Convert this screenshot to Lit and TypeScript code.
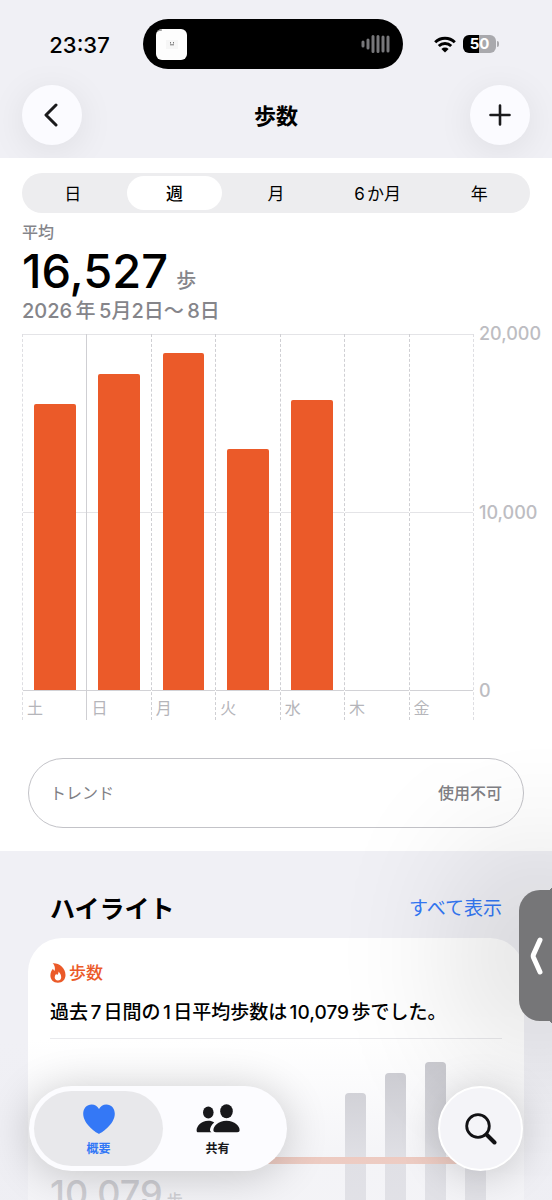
import { LitElement, html, css, svg } from "lit";
import { customElement, state } from "lit/decorators.js";

const DAYS = [
  { label: "土", steps: 16070 },
  { label: "日", steps: 17750, solid: true },
  { label: "月", steps: 18930 },
  { label: "火", steps: 13540 },
  { label: "水", steps: 16270 },
  { label: "木", steps: 0 },
  { label: "金", steps: 0 },
];
const MAX_STEPS = 20000;
const RANGES = ["日", "週", "月", "6か月", "年"];
const MINI_BARS = [86, 95, 100, 75];

const chevron = svg`<path d="M12 2 2 12l10 10" fill="none" stroke="#1a1a1c" stroke-width="3" stroke-linecap="round" stroke-linejoin="round"/>`;

@customElement("app-root")
export class AppRoot extends LitElement {
  @state() private range = "週";
  @state() private tab = "summary";

  static styles = css`
    :host {
      display: block;
      font-family: Inter, "Noto Sans CJK JP", sans-serif;
      color: #000;
      text-autospace: normal;
    }
    * { box-sizing: border-box; }
    button {
      font: inherit;
      color: inherit;
      border: 0;
      padding: 0;
      margin: 0;
      background: none;
      cursor: pointer;
    }
    h1, h2, p { margin: 0; }
    svg { display: block; }
    .screen {
      position: relative;
      height: 100vh;
      display: flex;
      flex-direction: column;
      overflow: hidden;
      background: #f0f0f5;
    }
    .top {
      padding: 19px 0 13px;
      display: flex;
      flex-direction: column;
      gap: 16px;
    }
    .status {
      display: grid;
      grid-template-columns: 24fr 260px 25fr;
      height: 50px;
      align-items: center;
    }
    .time {
      padding: 2px 0 0 16px;
      text-align: center;
      font-size: 22px;
      line-height: 28px;
      font-weight: 500;
    }
    .island {
      height: 50px;
      border-radius: 25px;
      background: #000;
      display: flex;
      align-items: center;
      justify-content: space-between;
      padding: 0 13px;
    }
    .signals {
      display: flex;
      justify-content: center;
      align-items: center;
      gap: 7px;
      padding-right: 22px;
    }
    .battery { display: flex; align-items: center; gap: 1px; }
    .cell {
      width: 33px;
      height: 18px;
      border-radius: 6px;
      background: linear-gradient(90deg, #000 50%, #a9a9ad 50%);
      color: #fff;
      font-size: 15px;
      line-height: 18px;
      font-weight: 700;
      text-align: center;
    }
    .nub { width: 2px; height: 6px; border-radius: 0 2px 2px 0; background: #a9a9ad; }
    .bar {
      display: flex;
      align-items: center;
      justify-content: space-between;
      padding: 0 22px;
    }
    .bar h1 { padding-top: 2px; font-size: 22px; line-height: 30px; font-weight: 600; }
    .round {
      width: 60px;
      height: 60px;
      border-radius: 50%;
      background: #fbfbff;
      box-shadow: 0 6px 36px rgba(0, 0, 0, 0.08);
      display: grid;
      place-items: center;
    }
    .scroll { flex: 1; min-height: 0; overflow: hidden; }
    .panel { background: #fff; padding: 15px 0 23px; }
    .segments {
      display: flex;
      height: 40px;
      margin: 0 22px;
      padding: 3px 0;
      border-radius: 20px;
      background: #ededef;
    }
    .segment {
      flex: 1;
      margin: 0 3px;
      padding-top: 2px;
      border-radius: 17px;
      font-size: 17px;
      line-height: 24px;
      font-weight: 400;
    }
    .segment.on { background: #fff; font-weight: 500; }
    .summary { margin: 7px 22px 10px; color: #85858a; }
    .caption { font-size: 16px; line-height: 24px; font-weight: 500; }
    .total { display: flex; align-items: baseline; gap: 8px; font-size: 20px; line-height: 24px; font-weight: 500; }
    .total strong { font-size: 47px; line-height: 54px; font-weight: 500; color: #000; }
    .dates { font-size: 20px; line-height: 26px; font-weight: 500; text-autospace: no-autospace; }
    .chart {
      display: grid;
      grid-template-columns: 1fr 78px;
      margin-left: 22px;
    }
    .plot { display: flex; border-right: 1px dashed #dedee2; }
    .day {
      flex: 1;
      min-width: 0;
      display: flex;
      flex-direction: column;
      border-left: 1px dashed #cfcfd3;
    }
    .day:first-child { border-left-color: #dedee2; }
    .day.solid { border-left-style: solid; }
    .track {
      height: 357px;
      display: flex;
      align-items: flex-end;
      justify-content: center;
      border-bottom: 1px solid #d2d2d6;
      background: linear-gradient(#e4e4e7, #e4e4e7) 0 0 / 100% 1px no-repeat,
        linear-gradient(#e4e4e7, #e4e4e7) 0 50% / 100% 1px no-repeat;
    }
    .fill { width: 66%; border-radius: 2px 2px 0 0; background: #eb5a29; }
    .name { height: 29px; padding: 3px 0 0 4px; font-size: 16px; line-height: 29px; color: #b5b5ba; }
    .scale {
      height: 379px;
      margin-top: -11px;
      padding-left: 5px;
      display: flex;
      flex-direction: column;
      justify-content: space-between;
      font-size: 18px;
      line-height: 22px;
      font-weight: 500;
      color: #bdbdc2;
      white-space: nowrap;
    }
    .trend {
      width: calc(100% - 56px);
      margin: 38px 28px 0;
      height: 70px;
      padding: 0 21px;
      display: flex;
      align-items: center;
      justify-content: space-between;
      border: 1px solid #c3c3c8;
      border-radius: 35px;
      font-size: 16px;
      line-height: 24px;
      color: #808085;
    }
    .trend b { font-weight: 500; }
    .heading {
      display: flex;
      align-items: center;
      justify-content: space-between;
      padding: 39px 50px 10px;
    }
    .heading h2 { font-size: 25px; line-height: 38px; font-weight: 700; }
    .heading a { font-size: 19px; line-height: 38px; color: #3478f6; text-decoration: none; }
    .card {
      margin: 0 28px;
      padding: 23px 22px 0;
      height: 420px;
      border-radius: 34px;
      background: #fff;
    }
    .topic {
      display: flex;
      align-items: center;
      gap: 3px;
      color: #eb5a29;
      font-size: 17px;
      line-height: 24px;
      font-weight: 500;
    }
    .fact {
      margin-top: 12px;
      padding-bottom: 9px;
      border-bottom: 1px solid #e9e9ec;
      font-size: 19px;
      line-height: 32px;
      font-weight: 500;
      white-space: nowrap;
    }
    .mini { position: relative; height: 220px; margin-top: 23px; }
    .mini-bars { display: flex; height: 100%; justify-content: flex-end; align-items: flex-end; gap: 19px; padding-right: 16px; }
    .mini-bar { width: 21px; border-radius: 4px 4px 0 0; background: #c6c6cc; }
    .mini-line { position: absolute; left: 0; right: 0; top: 95px; height: 7px; background: #eb8b68; }
    .mini-total { position: absolute; left: 0; top: 107px; font-size: 16px; line-height: 48px; font-weight: 500; color: #8e8e93; }
    .mini-total b { font-size: 36px; font-weight: 500; }
    .scrim {
      position: absolute;
      left: 0;
      right: 0;
      bottom: 0;
      height: 160px;
      pointer-events: none;
      background: linear-gradient(rgba(238, 238, 243, 0), rgba(238, 238, 243, 0.65) 75%, rgba(238, 238, 243, 0.68));
    }
    .handle {
      position: absolute;
      right: 0;
      top: 890px;
      width: 33px;
      height: 131px;
      border-radius: 21px 0 0 21px;
      background: #767678;
      box-shadow: 0 0 150px 28px rgba(0, 0, 0, 0.24);
      display: grid;
      place-items: center;
    }
    .handle::before,
    .handle::after {
      content: "";
      position: absolute;
      right: 0;
      width: 4px;
      height: 4px;
    }
    .handle::before { top: -4px; background: radial-gradient(circle at 0 0, transparent 4px, #767678 4px); }
    .handle::after { bottom: -4px; background: radial-gradient(circle at 0 100%, transparent 4px, #767678 4px); }
    .floating {
      position: absolute;
      left: 29px;
      right: 29px;
      bottom: 29px;
      display: flex;
      justify-content: space-between;
    }
    .tabs {
      display: flex;
      width: 258px;
      height: 85px;
      padding: 5px;
      border-radius: 43px;
      background: #fcfcff;
      box-shadow: 0 4px 44px rgba(0, 0, 0, 0.2);
    }
    .tab {
      flex: 1 0 129px;
      display: flex;
      flex-direction: column;
      align-items: center;
      gap: 5px;
      padding-top: 13px;
      border-radius: 38px;
      font-size: 12px;
      line-height: 20px;
      font-weight: 600;
      color: #18181b;
    }
    .tab + .tab { margin-left: -10px; }
    .tab.on { background: #e8e8eb; color: #3478f6; }
    .search {
      width: 85px;
      height: 85px;
      border-radius: 50%;
      border: 2px solid #fff;
      background: #f4f4f8;
      box-shadow: 0 4px 40px rgba(0, 0, 0, 0.18);
      display: grid;
      place-items: center;
    }
  `;

  private renderStatus() {
    return html`
      <div class="status">
        <div class="time">23:37</div>
        <div class="island">
          <svg width="31" height="31" viewBox="0 0 31 31" aria-hidden="true">
            <rect width="31" height="31" rx="6" fill="#fdfdfd" />
            <path d="M1 2.500Q3 1 6 1" stroke="#777" stroke-width="1" fill="none" />
            <rect x="10" y="11" width="12" height="9" fill="#f6f6f6" />
            <path d="M14.500 13v1.500M17.500 13v1.500M14 15.800h4" stroke="#777" stroke-width="1" fill="none" />
          </svg>
          <svg width="29" height="20" viewBox="0 0 29 20" aria-hidden="true">
            <path d="M2 8v4M7 6v8M12 2.500v15M17 2.500v15M22 3v14M27 3v14" stroke="#77777a" stroke-width="3" stroke-linecap="round" />
          </svg>
        </div>
        <div class="signals">
          <svg width="22" height="17" viewBox="0 0 22 17" aria-label="Wi-Fi">
            <g fill="none" stroke="#000" stroke-width="3">
              <path d="M1.200 6.300a14 14 0 0 1 19.600 0" />
              <path d="M4.800 10a9 9 0 0 1 12.400 0" />
            </g>
            <path d="M11 16.600 7.400 13a5.200 5.200 0 0 1 7.200 0z" />
          </svg>
          <div class="battery"><div class="cell">50</div><div class="nub"></div></div>
        </div>
      </div>
    `;
  }

  private renderChart() {
    return html`
      <div class="chart">
        <div class="plot">
          ${DAYS.map(
            (d) => html`
              <div class="day ${d.solid ? "solid" : ""}">
                <div class="track">
                  <div class="fill" style="height:${(d.steps / MAX_STEPS) * 100}%"></div>
                </div>
                <div class="name">${d.label}</div>
              </div>
            `
          )}
        </div>
        <div class="scale"><span>20,000</span><span>10,000</span><span>0</span></div>
      </div>
    `;
  }

  render() {
    return html`
      <div class="screen">
        <header class="top">
          ${this.renderStatus()}
          <div class="bar">
            <button class="round" aria-label="戻る">
              <svg width="17" height="24" viewBox="0 0 17 24">${chevron}</svg>
            </button>
            <h1>歩数</h1>
            <button class="round" aria-label="追加">
              <svg width="22" height="22" viewBox="0 0 22 22">
                <path d="M11 1.500v19M1.500 11h19" stroke="#1a1a1c" stroke-width="2.600" stroke-linecap="round" />
              </svg>
            </button>
          </div>
        </header>

        <main class="scroll">
          <section class="panel">
            <div class="segments">
              ${RANGES.map(
                (r) => html`<button
                  class="segment ${r === this.range ? "on" : ""}"
                  aria-pressed=${r === this.range}
                  @click=${() => (this.range = r)}
                >${r}</button>`
              )}
            </div>
            <div class="summary">
              <p class="caption">平均</p>
              <p class="total"><strong>16,527</strong>歩</p>
              <p class="dates">2026&thinsp;年&thinsp;5月2日〜&thinsp;8日</p>
            </div>
            ${this.renderChart()}
            <button class="trend"><span>トレンド</span><b>使用不可</b></button>
          </section>

          <section>
            <div class="heading">
              <h2>ハイライト</h2>
              <a href="#">すべて表示</a>
            </div>
            <article class="card">
              <div class="topic">
                <svg width="16" height="20" viewBox="0 0 16 20" aria-hidden="true">
                  <path
                    fill="#eb5a29"
                    fill-rule="evenodd"
                    d="M2.600.300C8.500-.300 15.500 4.500 15.500 12c0 4.500-3 7.700-7.600 7.700S.400 16.600.400 12.500C.400 9.500 1.600 7.500 3 5.800c.4 1 .8 1.600 1.600 2C5.300 5 4.800 2.200 2.600.300zM8.400 8.500c.3 2-.4 2.700-1.300 3.500-.4-.3-.7-.7-.9-1.200-1 1.200-1.500 2.300-1.500 3.500 0 1.900 1.300 3.200 3.200 3.200s3.300-1.300 3.300-3.300c0-2.300-1.200-4.300-2.800-5.700z"
                  />
                </svg>
                <span>歩数</span>
              </div>
              <p class="fact">過去7日間の1日平均歩数は10,079歩でした。</p>
              <div class="mini">
                <div class="mini-bars">
                  ${MINI_BARS.map((h) => html`<div class="mini-bar" style="height:${h}%"></div>`)}
                </div>
                <div class="mini-line"></div>
                <p class="mini-total"><b>10,079</b> 歩</p>
              </div>
            </article>
          </section>
        </main>

        <div class="scrim"></div>

        <button class="handle" aria-label="開く">
          <svg width="14" height="40" viewBox="0 0 14 40">
            <path d="M11 4 4.500 18.500q-.6 1.500 0 3L11 36" fill="none" stroke="#fff" stroke-width="5" stroke-linecap="round" stroke-linejoin="round" />
          </svg>
        </button>

        <div class="floating">
          <nav class="tabs">
            <button class="tab ${this.tab === "summary" ? "on" : ""}" @click=${() => (this.tab = "summary")}>
              <svg width="32" height="30" viewBox="0 0 32 30" aria-hidden="true">
                <path fill="currentColor" d="M16 29.800C14.500 29.800.200 20.500.200 9.800.200 4.200 3.800.400 8.600.400c3.400 0 6 1.900 7.400 4.600C17.400 2.300 20 .400 23.400.400c4.800 0 8.400 3.800 8.400 9.400C31.800 20.500 17.500 29.800 16 29.800z" />
              </svg>
              <span>概要</span>
            </button>
            <button class="tab ${this.tab === "sharing" ? "on" : ""}" @click=${() => (this.tab = "sharing")}>
              <svg width="44" height="30" viewBox="0 0 44 30" fill="currentColor" aria-hidden="true">
                <ellipse cx="12.300" cy="8.600" rx="5.300" ry="6" />
                <path d="M15.500 28.300H2.400C1.200 28.300.600 27.600.600 26.400.600 22.400 5 16.800 12.300 16.800c2.400 0 4.300.6 5.900 1.600-2.700 2.200-4.200 5.200-4.200 7.600 0 .9.500 1.800 1.500 2.300z" />
                <ellipse cx="30.500" cy="7.300" rx="6.300" ry="7" />
                <path d="M30.500 16.800c8.400 0 13.100 5.600 13.100 9.300 0 1.500-.8 2.200-2.400 2.200H19.800c-1.600 0-2.400-.7-2.400-2.200 0-3.700 4.700-9.300 13.100-9.300z" stroke="#fcfcff" stroke-width="1.500" paint-order="stroke" />
              </svg>
              <span>共有</span>
            </button>
          </nav>
          <button class="search" aria-label="検索">
            <svg width="32" height="32" viewBox="0 0 32 32">
              <circle cx="13" cy="13" r="11.300" fill="none" stroke="#111114" stroke-width="2.800" />
              <path d="m21.500 21.500 8 8" stroke="#111114" stroke-width="4" stroke-linecap="round" />
            </svg>
          </button>
        </div>
      </div>
    `;
  }
}
